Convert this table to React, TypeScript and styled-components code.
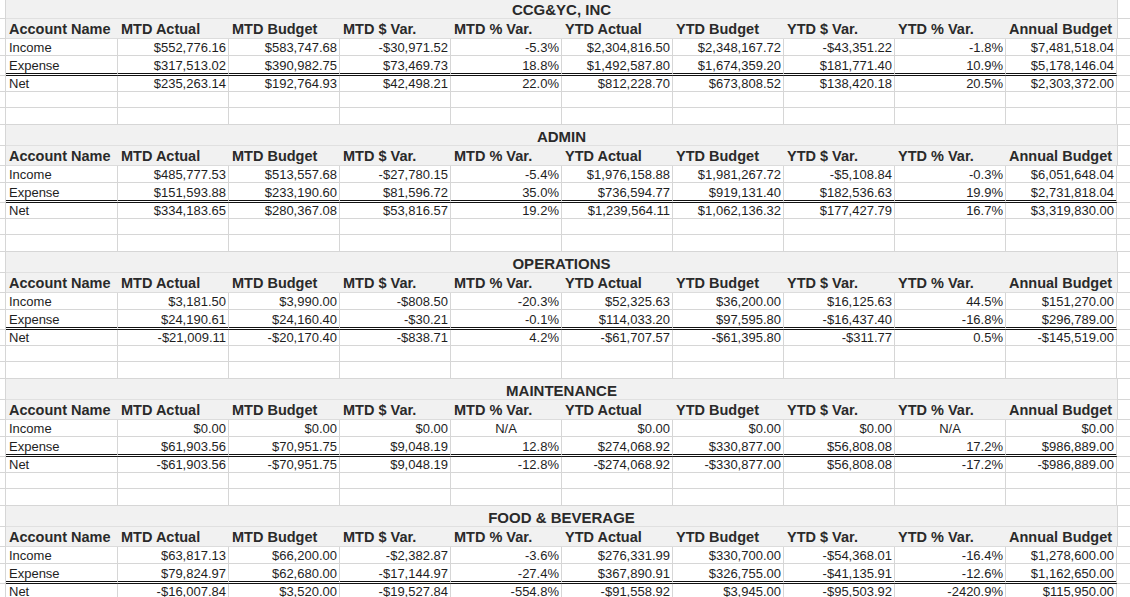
import React from "react";
import styled, { createGlobalStyle } from "styled-components";

const GlobalStyle = createGlobalStyle`
  html, body {
    margin: 0;
    padding: 0;
    background: #ffffff;
    overflow: hidden;
  }
  body {
    font-family: "Liberation Sans", Arial, sans-serif;
    color: #1a1a1a;
  }
  * { box-sizing: border-box; }
`;

const GRID = "#d6d6d6";
const FILL = "#f1f1f1";

const Sheet = styled.div`
  width: 1130px;
  margin-top: -2px;
  display: flex;
  flex-direction: column;
`;

const Row = styled.div<{ $h: number }>`
  display: grid;
  grid-template-columns: 6px 112px repeat(9, 111px) 13px;
  height: ${(p) => p.$h}px;
`;

const Gutter = styled.div`
  border-right: 1px solid ${GRID};
  border-bottom: 1px solid ${GRID};
`;

const Trail = styled.div<{ $lined?: boolean }>`
  border-bottom: 1px solid ${GRID};
  border-left: ${(p) => (p.$lined ? "none" : `1px solid ${GRID}`)};
`;

const TitleCell = styled.div`
  grid-column: span 10;
  background: ${FILL};
  border-bottom: 1px solid #e0e0e0;
  display: flex;
  align-items: center;
  justify-content: center;
  font-weight: bold;
  font-size: 15px;
  color: #2a2a2a;
  padding-top: 2px;
`;

const HeaderCell = styled.div`
  background: ${FILL};
  border-bottom: 1px solid #dcdcdc;
  display: flex;
  align-items: center;
  padding-left: 3px;
  padding-top: 1px;
  font-weight: bold;
  font-size: 14.5px;
  color: #2a2a2a;
  white-space: nowrap;
  overflow: visible;
`;

const DataCell = styled.div<{ $align: "left" | "right" | "center"; $double?: boolean }>`
  border-right: 1px solid ${GRID};
  border-bottom: ${(p) => (p.$double ? "3px double #111" : `1px solid ${GRID}`)};
  display: flex;
  align-items: ${(p) => (p.$double ? "flex-start" : "center")};
  justify-content: ${(p) =>
    p.$align === "left" ? "flex-start" : p.$align === "right" ? "flex-end" : "center"};
  padding-left: ${(p) => (p.$align === "left" ? "3px" : "0")};
  padding-right: ${(p) => (p.$align === "right" ? "2px" : "0")};
  padding-top: ${(p) => (p.$double ? "2px" : "0")};
  font-size: 13px;
  line-height: 15px;
  color: #1e1e1e;
  white-space: nowrap;
`;

const EmptyCell = styled.div`
  border-right: 1px solid ${GRID};
  border-bottom: 1px solid ${GRID};
`;

type Block = {
  title: string;
  rows: [string, string[]][];
};

const HEADERS = [
  "Account Name",
  "MTD Actual",
  "MTD Budget",
  "MTD $ Var.",
  "MTD % Var.",
  "YTD Actual",
  "YTD Budget",
  "YTD $ Var.",
  "YTD % Var.",
  "Annual Budget",
];

const BLOCKS: Block[] = [
  {
    title: "CCG&YC, INC",
    rows: [
      ["Income", ["$552,776.16", "$583,747.68", "-$30,971.52", "-5.3%", "$2,304,816.50", "$2,348,167.72", "-$43,351.22", "-1.8%", "$7,481,518.04"]],
      ["Expense", ["$317,513.02", "$390,982.75", "$73,469.73", "18.8%", "$1,492,587.80", "$1,674,359.20", "$181,771.40", "10.9%", "$5,178,146.04"]],
      ["Net", ["$235,263.14", "$192,764.93", "$42,498.21", "22.0%", "$812,228.70", "$673,808.52", "$138,420.18", "20.5%", "$2,303,372.00"]],
    ],
  },
  {
    title: "ADMIN",
    rows: [
      ["Income", ["$485,777.53", "$513,557.68", "-$27,780.15", "-5.4%", "$1,976,158.88", "$1,981,267.72", "-$5,108.84", "-0.3%", "$6,051,648.04"]],
      ["Expense", ["$151,593.88", "$233,190.60", "$81,596.72", "35.0%", "$736,594.77", "$919,131.40", "$182,536.63", "19.9%", "$2,731,818.04"]],
      ["Net", ["$334,183.65", "$280,367.08", "$53,816.57", "19.2%", "$1,239,564.11", "$1,062,136.32", "$177,427.79", "16.7%", "$3,319,830.00"]],
    ],
  },
  {
    title: "OPERATIONS",
    rows: [
      ["Income", ["$3,181.50", "$3,990.00", "-$808.50", "-20.3%", "$52,325.63", "$36,200.00", "$16,125.63", "44.5%", "$151,270.00"]],
      ["Expense", ["$24,190.61", "$24,160.40", "-$30.21", "-0.1%", "$114,033.20", "$97,595.80", "-$16,437.40", "-16.8%", "$296,789.00"]],
      ["Net", ["-$21,009.11", "-$20,170.40", "-$838.71", "4.2%", "-$61,707.57", "-$61,395.80", "-$311.77", "0.5%", "-$145,519.00"]],
    ],
  },
  {
    title: "MAINTENANCE",
    rows: [
      ["Income", ["$0.00", "$0.00", "$0.00", "N/A", "$0.00", "$0.00", "$0.00", "N/A", "$0.00"]],
      ["Expense", ["$61,903.56", "$70,951.75", "$9,048.19", "12.8%", "$274,068.92", "$330,877.00", "$56,808.08", "17.2%", "$986,889.00"]],
      ["Net", ["-$61,903.56", "-$70,951.75", "$9,048.19", "-12.8%", "-$274,068.92", "-$330,877.00", "$56,808.08", "-17.2%", "-$986,889.00"]],
    ],
  },
  {
    title: "FOOD & BEVERAGE",
    rows: [
      ["Income", ["$63,817.13", "$66,200.00", "-$2,382.87", "-3.6%", "$276,331.99", "$330,700.00", "-$54,368.01", "-16.4%", "$1,278,600.00"]],
      ["Expense", ["$79,824.97", "$62,680.00", "-$17,144.97", "-27.4%", "$367,890.91", "$326,755.00", "-$41,135.91", "-12.6%", "$1,162,650.00"]],
      ["Net", ["-$16,007.84", "$3,520.00", "-$19,527.84", "-554.8%", "-$91,558.92", "$3,945.00", "-$95,503.92", "-2420.9%", "$115,950.00"]],
    ],
  },
];

const ROW_H = [17, 20, 15];

function SectionBlock({ block }: { block: Block }) {
  return (
    <>
      <Row $h={21}>
        <Gutter />
        <TitleCell>{block.title}</TitleCell>
        <Trail />
      </Row>
      <Row $h={20}>
        <Gutter />
        {HEADERS.map((h) => (
          <HeaderCell key={h}>{h}</HeaderCell>
        ))}
        <Trail />
      </Row>
      {block.rows.map(([label, vals], ri) => {
        const dbl = ri === 1;
        return (
          <Row $h={ROW_H[ri]} key={label}>
            <Gutter />
            <DataCell $align="left" $double={dbl}>
              {label}
            </DataCell>
            {vals.map((v, i) => (
              <DataCell key={i} $align={v === "N/A" ? "center" : "right"} $double={dbl}>
                {v}
              </DataCell>
            ))}
            <Trail $lined />
          </Row>
        );
      })}
      {[0, 1].map((k) => (
        <Row $h={17} key={`e${k}`}>
          <Gutter />
          {Array.from({ length: 10 }).map((_, i) => (
            <EmptyCell key={i} />
          ))}
          <Trail $lined />
        </Row>
      ))}
    </>
  );
}

export default function App() {
  return (
    <>
      <GlobalStyle />
      <Sheet>
        {BLOCKS.map((b) => (
          <SectionBlock key={b.title} block={b} />
        ))}
      </Sheet>
    </>
  );
}
